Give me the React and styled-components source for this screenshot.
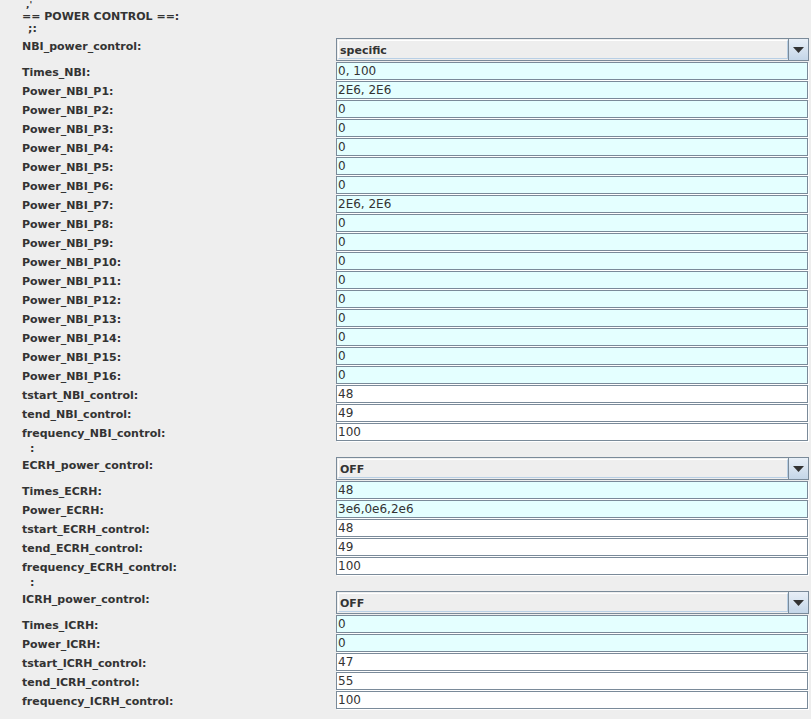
import React from 'react';
import styled, { createGlobalStyle } from 'styled-components';

const GlobalStyle = createGlobalStyle`
  html, body {
    margin: 0;
    padding: 0;
    background: #eeeeee;
  }
  body {
    font-family: 'DejaVu Sans', 'Liberation Sans', sans-serif;
    color: #333333;
  }
`;

const Panel = styled.div`
  width: 811px;
  height: 719px;
  overflow: hidden;
  background: #eeeeee;
  padding-left: 22px;
  box-sizing: border-box;
`;

const Note = styled.div`
  height: ${p => p.h}px;
  padding-left: ${p => p.indent || 0}px;
  padding-top: ${p => p.top || 0}px;
  box-sizing: border-box;
  font-size: ${p => p.size || 11}px;
  font-weight: bold;
  line-height: ${p => p.lh || 12}px;
  white-space: pre;
`;

const Row = styled.div`
  display: grid;
  grid-template-columns: 314px 473px;
  height: ${p => p.h}px;
`;

const Label = styled.div`
  font-size: 11px;
  font-weight: bold;
  line-height: 13px;
  padding-top: ${p => p.top}px;
  white-space: nowrap;
`;

const Field = styled.div`
  height: 15px;
  width: 469px;
  padding-top: 1px;
  border: 1px solid #7a8a99;
  box-shadow: 1px 1px 0 #ffffff;
  background: ${p => (p.tinted ? '#e4ffff' : '#ffffff')};
  font-size: 12px;
  line-height: 15px;
  padding-left: 1px;
  color: #333333;
  white-space: pre;
`;

const Combo = styled.div`
  display: flex;
  height: 23px;
  width: 473px;
  box-sizing: border-box;
  border: 1px solid #7a8a99;
  background: #eeeeee;
`;

const ComboValue = styled.div`
  flex: 1;
  border: 1px solid #ffffff;
  border-right-color: #b8cfe5;
  border-bottom-color: #b8cfe5;
  margin: 1px 0 1px 1px;
  font-size: 11px;
  font-weight: bold;
  line-height: 17px;
  padding: 1px 0 0 1px;
  color: #333333;
`;

const ArrowButton = styled.div`
  width: 19px;
  border-left: 1px solid #7a8a99;
  background: linear-gradient(#e8eff7, #c4d6e8);
  display: flex;
  align-items: center;
  justify-content: center;
`;

const fieldRow = (label, value, tinted) => ({ label, value, tinted });

const sections = [
  {
    gap: null,
    combo: ['NBI_power_control:', 'specific'],
    fields: [
      fieldRow('Times_NBI:', '0, 100', true),
      fieldRow('Power_NBI_P1:', '2E6, 2E6', true),
      fieldRow('Power_NBI_P2:', '0', true),
      fieldRow('Power_NBI_P3:', '0', true),
      fieldRow('Power_NBI_P4:', '0', true),
      fieldRow('Power_NBI_P5:', '0', true),
      fieldRow('Power_NBI_P6:', '0', true),
      fieldRow('Power_NBI_P7:', '2E6, 2E6', true),
      fieldRow('Power_NBI_P8:', '0', true),
      fieldRow('Power_NBI_P9:', '0', true),
      fieldRow('Power_NBI_P10:', '0', true),
      fieldRow('Power_NBI_P11:', '0', true),
      fieldRow('Power_NBI_P12:', '0', true),
      fieldRow('Power_NBI_P13:', '0', true),
      fieldRow('Power_NBI_P14:', '0', true),
      fieldRow('Power_NBI_P15:', '0', true),
      fieldRow('Power_NBI_P16:', '0', true),
      fieldRow('tstart_NBI_control:', '48'),
      fieldRow('tend_NBI_control:', '49'),
      fieldRow('frequency_NBI_control:', '100'),
    ],
  },
  {
    gap: ':',
    combo: ['ECRH_power_control:', 'OFF'],
    fields: [
      fieldRow('Times_ECRH:', '48', true),
      fieldRow('Power_ECRH:', '3e6,0e6,2e6', true),
      fieldRow('tstart_ECRH_control:', '48'),
      fieldRow('tend_ECRH_control:', '49'),
      fieldRow('frequency_ECRH_control:', '100'),
    ],
  },
  {
    gap: ':',
    combo: ['ICRH_power_control:', 'OFF'],
    fields: [
      fieldRow('Times_ICRH:', '0', true),
      fieldRow('Power_ICRH:', '0', true),
      fieldRow('tstart_ICRH_control:', '47'),
      fieldRow('tend_ICRH_control:', '55'),
      fieldRow('frequency_ICRH_control:', '100'),
    ],
  },
];

const Arrow = () => (
  <svg width="11" height="6" viewBox="0 0 11 6">
    <path d="M0 0h11L5.5 6z" fill="#333333" />
  </svg>
);

export default function App() {
  return (
    <Panel>
      <GlobalStyle />
      <Note h={10} indent={4} size={9} lh={10}>,'</Note>
      <Note h={12} top={1} lh={12}>== POWER CONTROL ==:</Note>
      <Note h={16} top={1} indent={6} lh={12}>;:</Note>
      {sections.map((s, i) => (
        <React.Fragment key={i}>
          {s.gap && <Note h={15} indent={8} lh={14}>{s.gap}</Note>}
          <Row h={24}>
            <Label top={2}>{s.combo[0]}</Label>
            <Combo>
              <ComboValue>{s.combo[1]}</ComboValue>
              <ArrowButton><Arrow /></ArrowButton>
            </Combo>
          </Row>
          {s.fields.map(f => (
            <Row h={19} key={f.label}>
              <Label top={4}>{f.label}</Label>
              <Field tinted={f.tinted}>{f.value}</Field>
            </Row>
          ))}
        </React.Fragment>
      ))}
    </Panel>
  );
}
